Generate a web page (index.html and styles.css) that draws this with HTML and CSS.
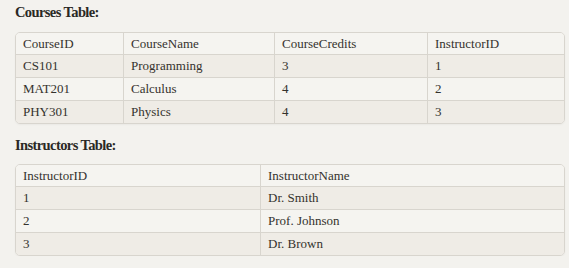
FILE: index.html
```html
<!DOCTYPE html>
<html>
<head>
<meta charset="utf-8">
<link rel="stylesheet" href="styles.css">
</head>
<body>
<div class="page">
  <h3 class="title">Courses Table:</h3>
  <div class="table-wrap">
    <table class="data courses">
      <thead>
        <tr><th>CourseID</th><th>CourseName</th><th>CourseCredits</th><th>InstructorID</th></tr>
      </thead>
      <tbody>
        <tr><td>CS101</td><td>Programming</td><td>3</td><td>1</td></tr>
        <tr><td>MAT201</td><td>Calculus</td><td>4</td><td>2</td></tr>
        <tr><td>PHY301</td><td>Physics</td><td>4</td><td>3</td></tr>
      </tbody>
    </table>
  </div>
  <h3 class="title second">Instructors Table:</h3>
  <div class="table-wrap">
    <table class="data instructors">
      <thead>
        <tr><th>InstructorID</th><th>InstructorName</th></tr>
      </thead>
      <tbody>
        <tr><td>1</td><td>Dr. Smith</td></tr>
        <tr><td>2</td><td>Prof. Johnson</td></tr>
        <tr><td>3</td><td>Dr. Brown</td></tr>
      </tbody>
    </table>
  </div>
</div>
</body>
</html>
```

FILE: styles.css
```css
html, body {
  margin: 0;
  padding: 0;
  background: #f3f2ee;
}
body {
  font-family: "Liberation Serif", "Times New Roman", serif;
  color: #2d2b27;
}
.page {
  width: 550px;
  margin-left: 15px;
  padding-top: 2px;
}
.title {
  margin: 0 0 10px 0;
  font-size: 14.5px;
  line-height: 20px;
  font-weight: 700;
  letter-spacing: -0.6px;
  color: #2a2925;
}
.title.second {
  margin-top: 11px;
  margin-bottom: 9px;
}
.table-wrap {
  border: 1px solid #d8d5ce;
  border-radius: 5px;
  overflow: hidden;
  box-shadow: 0 1px 2px rgba(0, 0, 0, 0.04);
}
.data {
  width: 100%;
  border-collapse: collapse;
  table-layout: fixed;
  font-size: 13px;
  color: #34322d;
}
.data th, .data td {
  text-align: left;
  font-weight: 400;
  padding: 0 7px;
  vertical-align: middle;
  border-left: 1px solid #d8d5ce;
}
.data th:first-child, .data td:first-child {
  border-left: none;
}
.data th {
  height: 21px;
  background: #f5f4f0;
  border-bottom: 1px solid #d8d5ce;
}
.data td {
  height: 22px;
}
.data tbody tr + tr td {
  border-top: 1px solid #d8d5ce;
}
.data tbody tr:nth-child(odd) td {
  background: #efece6;
}
.data tbody tr:nth-child(even) td {
  background: #f5f4f0;
}
.courses th:nth-child(1) { width: 93px; }
.courses th:nth-child(2) { width: 136px; }
.courses th:nth-child(3) { width: 138px; }
.instructors th:nth-child(1) { width: 230px; }
```
